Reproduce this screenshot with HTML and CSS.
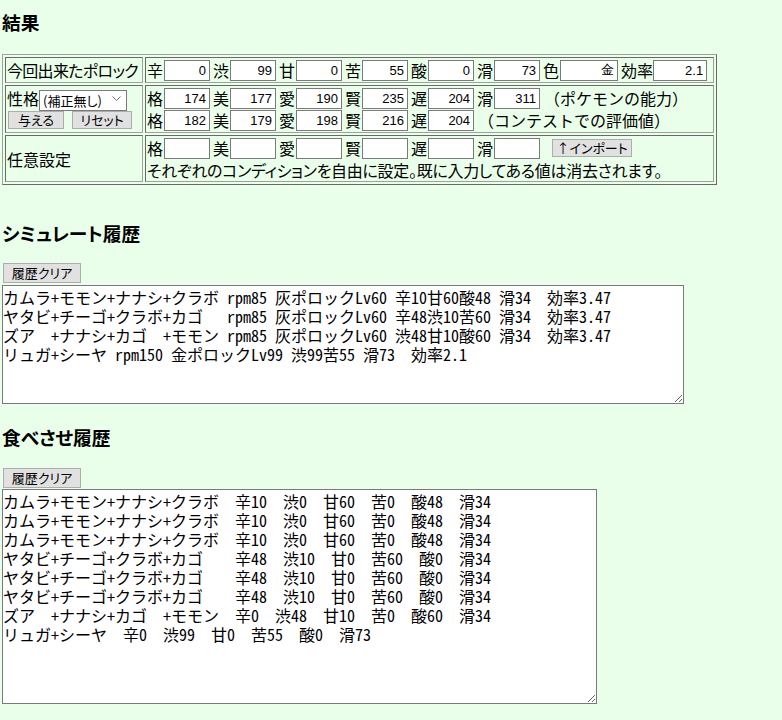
FILE: index.html
```html
<!DOCTYPE html>
<html lang="ja">
<head>
<meta charset="utf-8">
<title>ポロック計算</title>
<link rel="stylesheet" href="styles.css">
</head>
<body>
<h3 class="h-result">結果</h3>
<table class="result">
<tr>
<td class="lcell"><span class="tight">今回出来たポロック</span></td>
<td class="rcell">
<div class="line">
<span class="lb">辛</span><input class="num" value="0">
<span class="lb">渋</span><input class="num" value="99">
<span class="lb">甘</span><input class="num" value="0">
<span class="lb">苦</span><input class="num" value="55">
<span class="lb">酸</span><input class="num" value="0">
<span class="lb">滑</span><input class="num" value="73">
<span class="lb">色</span><input class="num wide" value="金">
<span class="lb">効率</span><input class="num eff" value="2.1">
</div>
</td>
</tr>
<tr>
<td class="lcell top">
<div class="nature"><span class="lb">性格</span><span class="selwrap"><select class="sel"><option>(補正無し)</option></select><svg class="chev" width="9" height="6" viewBox="0 0 9 6"><path d="M0.5 0.5 L4.5 4.5 L8.5 0.5" fill="none" stroke="#6d6d6d" stroke-width="1"/></svg></span></div>
<div class="btns"><button class="btn give">与える</button><button class="btn reset">リセット</button></div>
</td>
<td class="rcell">
<div class="line">
<span class="lb">格</span><input class="num" value="174">
<span class="lb">美</span><input class="num" value="177">
<span class="lb">愛</span><input class="num" value="190">
<span class="lb">賢</span><input class="num" value="235">
<span class="lb">遅</span><input class="num" value="204">
<span class="lb">滑</span><input class="num" value="311">
<span class="note">（ポケモンの能力）</span>
</div>
<div class="line">
<span class="lb">格</span><input class="num" value="182">
<span class="lb">美</span><input class="num" value="179">
<span class="lb">愛</span><input class="num" value="198">
<span class="lb">賢</span><input class="num" value="216">
<span class="lb">遅</span><input class="num" value="204">
<span class="note">（コンテストでの評価値）</span>
</div>
</td>
</tr>
<tr>
<td class="lcell">任意設定</td>
<td class="rcell">
<div class="line">
<span class="lb">格</span><input class="num" value="">
<span class="lb">美</span><input class="num" value="">
<span class="lb">愛</span><input class="num" value="">
<span class="lb">賢</span><input class="num" value="">
<span class="lb">遅</span><input class="num" value="">
<span class="lb">滑</span><input class="num" value="">
<button class="btn imp">↑インポート</button>
</div>
<div class="desc">それぞれのコンディションを自由に設定。既に入力してある値は消去されます。</div>
</td>
</tr>
</table>

<h3 class="h-sim">シミュレート履歴</h3>
<button class="btn clr clr1">履歴クリア</button>
<textarea class="log log1" readonly>カムラ+モモン+ナナシ+クラボ rpm85 灰ポロックLv60 辛10甘60酸48 滑34　効率3.47
ヤタビ+チーゴ+クラボ+カゴ　 rpm85 灰ポロックLv60 辛48渋10苦60 滑34　効率3.47
ズア　+ナナシ+カゴ　+モモン rpm85 灰ポロックLv60 渋48甘10酸60 滑34　効率3.47
リュガ+シーヤ rpm150 金ポロックLv99 渋99苦55 滑73　効率2.1</textarea>

<h3 class="h-eat">食べさせ履歴</h3>
<button class="btn clr clr2">履歴クリア</button>
<textarea class="log log2" readonly>カムラ+モモン+ナナシ+クラボ　辛10　渋0　甘60　苦0　酸48　滑34
カムラ+モモン+ナナシ+クラボ　辛10　渋0　甘60　苦0　酸48　滑34
カムラ+モモン+ナナシ+クラボ　辛10　渋0　甘60　苦0　酸48　滑34
ヤタビ+チーゴ+クラボ+カゴ　　辛48　渋10　甘0　苦60　酸0　滑34
ヤタビ+チーゴ+クラボ+カゴ　　辛48　渋10　甘0　苦60　酸0　滑34
ヤタビ+チーゴ+クラボ+カゴ　　辛48　渋10　甘0　苦60　酸0　滑34
ズア　+ナナシ+カゴ　+モモン　辛0　渋48　甘10　苦0　酸60　滑34
リュガ+シーヤ　辛0　渋99　甘0　苦55　酸0　滑73</textarea>
</body>
</html>
```
FILE: styles.css
```css
html {
  background: #eaffea;
}
body {
  margin: 0 2px;
  background: #eaffea;
  color: #000;
  font-family: "Noto Sans CJK JP", sans-serif;
  font-size: 16px;
  font-feature-settings: "palt";
}
h3 {
  font-size: 18.72px;
  line-height: 22px;
  margin: 0;
  font-weight: bold;
}
.h-result { margin-top: 11px; }
.h-sim { margin-top: 37px; }
.h-eat { margin-top: 22px; }

.result {
  margin-top: 21px;
  border-collapse: separate;
  border-spacing: 2px;
  border: 1px solid;
  border-color: #a0a0a0 #696969 #696969 #a0a0a0;
}
.result td {
  border: 1px solid;
  border-color: #696969 #a0a0a0 #a0a0a0 #696969;
  padding: 1px;
}
.lcell {
  width: 134px;
  max-width: 134px;
  white-space: nowrap;
  line-height: 22px;
}
.tight { letter-spacing: -0.7px; }
.lcell.top { vertical-align: top; }
.rcell { width: 565px; }

.line {
  display: flex;
  align-items: center;
  height: 22px;
  white-space: nowrap;
}
.lb { line-height: 20px; }
.num {
  box-sizing: border-box;
  width: 46px;
  height: 21px;
  margin: 0 3px 0 1px;
  padding: 0 3px;
  border: 1px solid #7a7a7a;
  border-radius: 0;
  background: #fff;
  color: #000;
  font: 13px "Liberation Sans", sans-serif;
  text-align: right;
}
.num.wide { width: 58px; }
.num.eff { width: 54px; margin-left: 0; }
.note {
  margin-left: 1px;
  font-feature-settings: normal;
  line-height: 20px;
}
.desc {
  margin-top: 1px;
  line-height: 20px;
  white-space: nowrap;
  letter-spacing: -0.3px;
}

.nature {
  display: flex;
  align-items: center;
  height: 22px;
}
.selwrap {
  position: relative;
  display: block;
  width: 88px;
  height: 21px;
}
.sel {
  appearance: none;
  -webkit-appearance: none;
  box-sizing: border-box;
  width: 88px;
  height: 21px;
  margin: 0;
  padding: 0 0 0 3px;
  border: 1px solid #7a7a7a;
  border-radius: 0;
  background: #fff;
  color: #000;
  font: 13px "Noto Sans CJK JP", sans-serif;
  font-feature-settings: "palt";
}
.chev {
  position: absolute;
  right: 6px;
  top: 8px;
  pointer-events: none;
}
.btns {
  display: flex;
  gap: 8px;
  margin-top: 2px;
  padding-left: 1px;
}

.btn {
  box-sizing: border-box;
  height: 18px;
  margin: 0;
  padding: 0;
  border: 1px solid #adadad;
  border-radius: 0;
  background: #e1e1e1;
  color: #000;
  font: 13px/16px "Noto Sans CJK JP", sans-serif;
  font-feature-settings: "palt";
}
.give { width: 56px; }
.reset { width: 60px; }
.imp { width: 80px; margin-left: 9px; }
.clr {
  display: block;
  width: 78px;
  height: 20px;
  margin-left: 1px;
}
.clr1 { margin-top: 19px; }
.clr2 { margin-top: 20px; }

.log {
  display: block;
  box-sizing: border-box;
  padding: 2px 0;
  border: 1px solid #7a7a7a;
  border-radius: 0;
  background: #fff;
  color: #000;
  font: 16px/19px "Noto Sans Mono CJK JP", "Noto Sans CJK JP", monospace;
  font-feature-settings: normal;
  white-space: pre;
  overflow: auto;
  resize: both;
}
.log1 {
  width: 682px;
  height: 119px;
  margin-top: 2px;
}
.log2 {
  width: 595px;
  height: 215px;
  margin-top: 1px;
}
```
